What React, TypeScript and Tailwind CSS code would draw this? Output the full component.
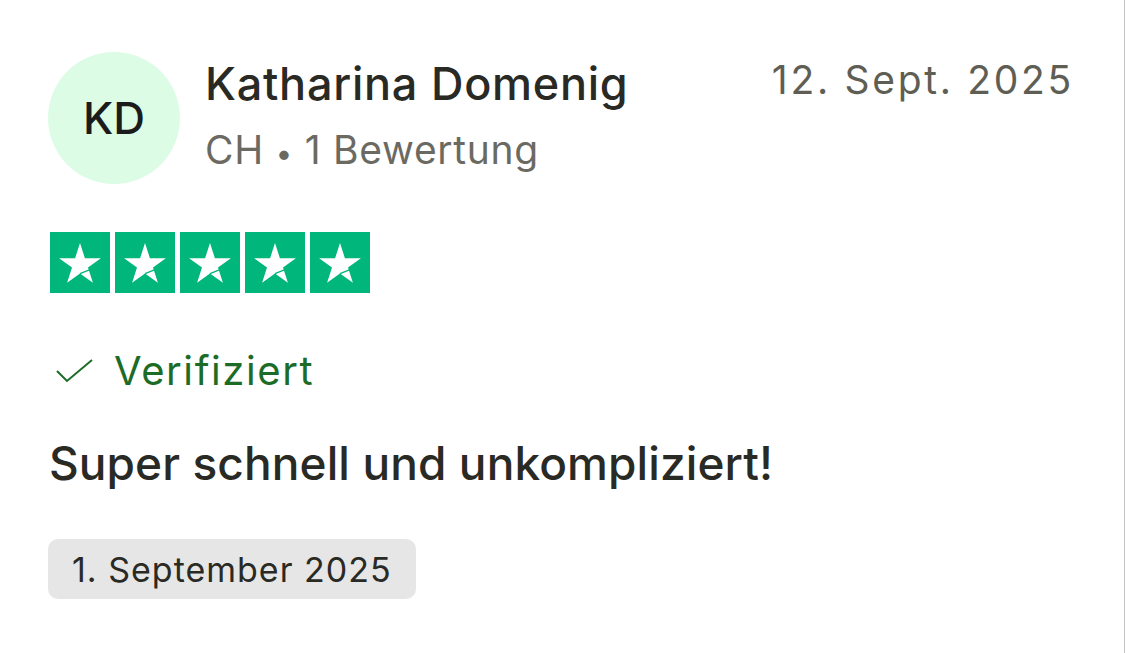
import React from 'react';

const FONT = { fontFamily: 'Inter, "Noto Sans", sans-serif' };

function StarBox() {
  return (
    <div className="w-[60px] h-[61px] bg-[#00b67a] flex items-center justify-center">
      <svg width="60" height="61" viewBox="0 0 60 61">
        <polygon
          fill="#fff"
          points="30,11 34.9,26.2 50.9,26.2 38,35.6 42.9,50.8 30,41.4 17.1,50.8 22,35.6 9.1,26.2 25.1,26.2"
        />
        <path d="M30 41.6 L40 37.6" stroke="#00b67a" strokeWidth="1.4" />
      </svg>
    </div>
  );
}

export default function App() {
  return (
    <div className="w-full h-screen bg-white border-r border-[#c4c4c4]" style={FONT}>
      <div className="pl-[48px] pr-[50px] pt-[52px]">
        {/* Header */}
        <div className="flex items-start justify-between">
          <div className="flex items-start gap-[25px]">
            <div className="w-[132px] h-[132px] rounded-full bg-[#dcfce6] flex items-center justify-center text-[44px] font-medium text-[#1b1b1b] shrink-0">
              KD
            </div>
            <div className="pt-[2px]">
              <div className="text-[45px] leading-[60px] font-medium text-[#2a2a25] tracking-[0.75px]">
                Katharina Domenig
              </div>
              <div className="h-[72px] text-[39px] leading-[72px] text-[#6b6a62] tracking-[0.7px]">
                CH <span className="text-[30px] leading-none">•</span> 1 Bewertung
              </div>
            </div>
          </div>
          <div className="text-[39px] leading-[56px] text-[#5f5e55] tracking-[2.7px]">12. Sept. 2025</div>
        </div>

        {/* Stars */}
        <div className="flex gap-[5px] mt-[46px] ml-[2px]">
          {[0, 1, 2, 3, 4].map(i => <StarBox key={i} />)}
        </div>

        {/* Verified */}
        <div className="flex items-center gap-[20px] mt-[53px] ml-[8px]">
          <svg width="38" height="26" viewBox="0 0 38 26" fill="none">
            <path d="M1 13 L11 23 L36 2" stroke="#1c6b27" strokeWidth="2" />
          </svg>
          <span className="text-[40px] leading-[50px] text-[#1c6b27] tracking-[1.6px]">Verifiziert</span>
        </div>

        {/* Title */}
        <div className="mt-[37px] ml-[1px] text-[46px] leading-[60px] font-medium text-[#2a2a25] tracking-[0.1px]">
          Super schnell und unkompliziert!
        </div>

        {/* Date badge */}
        <div className="mt-[46px] inline-flex items-center h-[60px] px-[24px] rounded-[10px] bg-[#e6e6e6] text-[34px] text-[#2a2a25] tracking-[1px]">
          1. September 2025
        </div>
      </div>
    </div>
  );
}
